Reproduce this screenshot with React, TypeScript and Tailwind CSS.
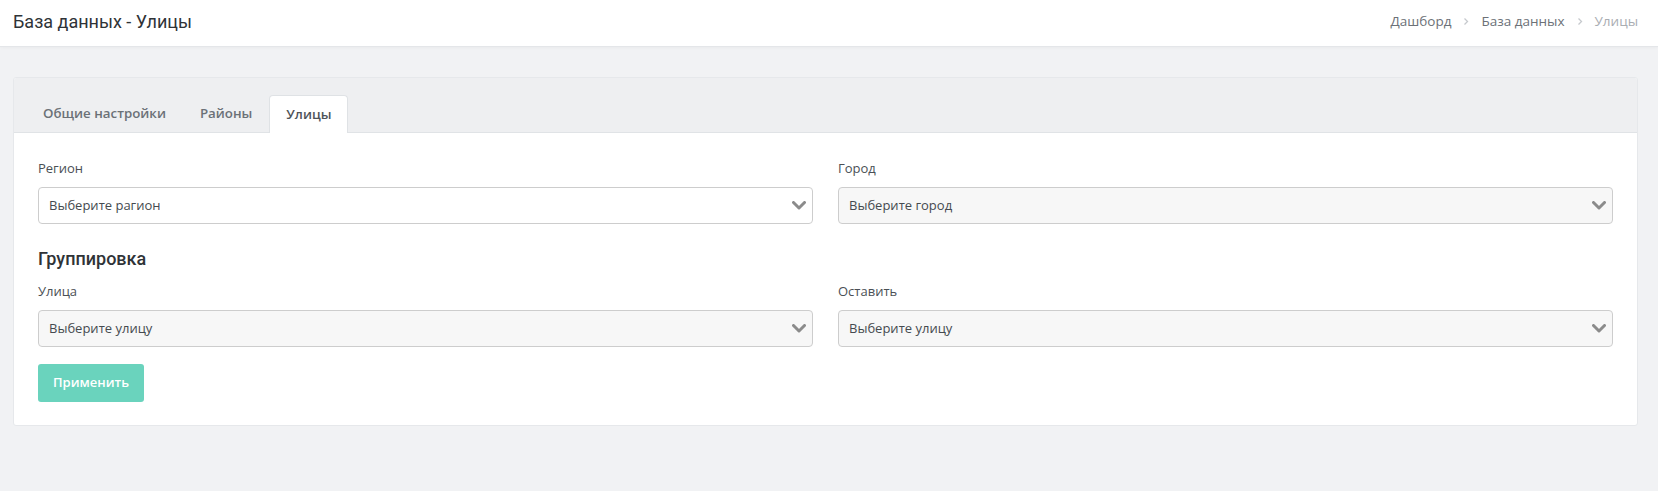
import React from "react";

function Chevron() {
  return (
    <svg width="14" height="9" viewBox="0 0 14 9" className="shrink-0">
      <polyline points="1.5,1.5 7,7 12.5,1.5" fill="none" stroke="#8b8b8b" strokeWidth="3" strokeLinecap="round" strokeLinejoin="round" />
    </svg>
  );
}

function Select({ text, white }: { text: string; white?: boolean }) {
  return (
    <div
      className={
        "h-[37px] flex items-center justify-between pl-[10px] pr-[6px] border border-[#cdcdcd] rounded-[4px] text-[13px] text-[#454a4f] " +
        (white ? "bg-white" : "bg-[#f7f7f7]")
      }
    >
      <span>{text}</span>
      <Chevron />
    </div>
  );
}

function Field({ label, text, white }: { label: string; text: string; white?: boolean }) {
  return (
    <div className="flex flex-col">
      <div className="text-[13px] leading-[20px] text-[#4a4f55] mb-[9px]">{label}</div>
      <Select text={text} white={white} />
    </div>
  );
}

function Crumbs() {
  const sep = (
    <svg width="6" height="9" viewBox="0 0 6 9" className="mx-[12px]">
      <polyline points="1.5,1.5 4.5,4.5 1.5,7.5" fill="none" stroke="#c6c9cd" strokeWidth="1.3" />
    </svg>
  );
  return (
    <div className="flex items-center text-[13.5px] text-[#6c7177]">
      <span>Дашборд</span>
      {sep}
      <span>База данных</span>
      {sep}
      <span className="text-[#a9adb2]">Улицы</span>
    </div>
  );
}

export default function App() {
  return (
    <div
      className="w-[1658px] h-[491px] bg-[#f1f2f4] overflow-hidden"
      style={{ fontFamily: '"Open Sans", "Noto Sans", sans-serif' }}
    >
      <header className="h-[47px] bg-white border-b border-[#e4e6e9] shadow-[0_1px_3px_rgba(0,0,0,0.03)] flex items-center justify-between pl-[13px] pr-[20px] pb-[3px]">
        <div
          className="text-[18px] text-[#2f3337]"
          style={{ fontFamily: 'Roboto, "Open Sans", sans-serif' }}
        >
          База данных - Улицы
        </div>
        <Crumbs />
      </header>

      <div className="pl-[13px] pr-[20px] pt-[30px]">
        <div className="bg-white border border-[#e6e8eb] rounded-[3px] overflow-hidden">
          <div className="bg-[#eeeff1] pt-[17px] pl-[12px] flex border-b border-[#e0e3e6]">
            <div className="px-[17px] h-[37px] flex items-center text-[13.3px] font-semibold text-[#6b7177]">
              Общие настройки
            </div>
            <div className="px-[17px] h-[37px] flex items-center text-[13.3px] font-semibold text-[#6b7177]">
              Районы
            </div>
            <div className="px-[16px] h-[38px] -mb-px flex items-center text-[13.3px] font-semibold text-[#4e5359] bg-white border border-b-0 border-[#dfe2e5] rounded-t-[4px]">
              Улицы
            </div>
          </div>

          <div className="pt-[25px] pb-[23px] px-[24px]">
            <div className="grid grid-cols-2 gap-x-[25px]">
              <Field label="Регион" text="Выберите рагион" white />
              <Field label="Город" text="Выберите город" />
            </div>
            <div
              className="mt-[23px] text-[18px] leading-[24px] font-medium text-[#2f3337]"
              style={{ fontFamily: 'Roboto, "Open Sans", sans-serif' }}
            >
              Группировка
            </div>
            <div className="grid grid-cols-2 gap-x-[25px] mt-[10px]">
              <Field label="Улица" text="Выберите улицу" />
              <Field label="Оставить" text="Выберите улицу" />
            </div>
            <button className="mt-[17px] h-[38px] px-[15px] rounded-[3px] bg-[#6ad3bd] text-white text-[13px] font-semibold">
              Применить
            </button>
          </div>
        </div>
      </div>
    </div>
  );
}
